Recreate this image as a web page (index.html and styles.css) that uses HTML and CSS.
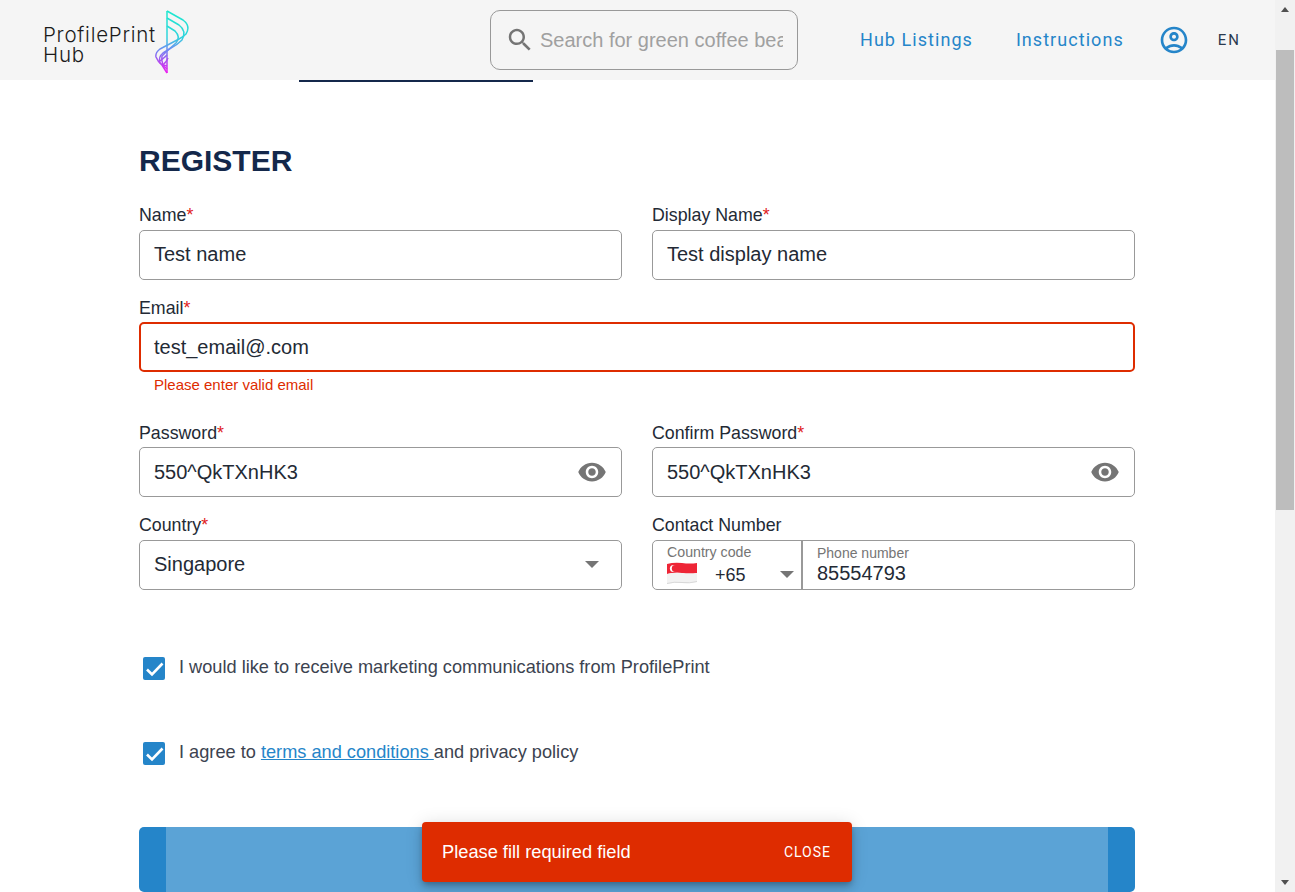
FILE: index.html
```html
<!DOCTYPE html>
<html lang="en">

<head>
    <meta charset="UTF-8" />
    <title>ProfilePrint Hub - Register</title>
    <link rel="stylesheet" href="styles.css">
</head>

<body>
    <div class="window">
        <div class="page">
            <header class="topbar">
                <a class="logo" href="#">
                    <span class="logo-text">ProfilePrint<br>Hub</span>
                    <svg class="logo-mark" width="36" height="68" viewBox="0 0 36 68" fill="none">
                        <defs>
                            <linearGradient id="logo-grad" gradientUnits="userSpaceOnUse" x1="0" y1="2" x2="0" y2="64">
                                <stop offset="0" stop-color="#1de8cf" />
                                <stop offset="0.42" stop-color="#2fd4dc" />
                                <stop offset="0.62" stop-color="#6d8cf2" />
                                <stop offset="0.82" stop-color="#b04cf0" />
                                <stop offset="1" stop-color="#ee1cf0" />
                            </linearGradient>
                        </defs>
                        <g stroke="url(#logo-grad)" stroke-width="1.5" stroke-linejoin="round">
                            <path d="M12 2V64" />
                            <path d="M12 2L28 11Q36 17 31 25Q28 28 24 30L5 40Q0 44 1 48Q3 53 7 56L12 64" />
                            <path d="M12 9L24 16Q32 22 27 31Q22 36 16 39L8 44Q3 48 5 54L12 60" />
                            <path d="M12 17L20 22Q26 28 21 34L12 42L7 47Q6 51 8 56L12 57" />
                            <path d="M5 52Q10 48 12 46M8 56Q12 52 13 49" />
                        </g>
                    </svg>
                </a>
                <label class="search">
                    <svg class="search-icon" width="30" height="30" viewBox="0 0 24 24">
                        <path d="M15.5 14h-.79l-.28-.27C15.41 12.59 16 11.11 16 9.5 16 5.91 13.09 3 9.5 3S3 5.91 3 9.5 5.91 16 9.5 16c1.61 0 3.09-.59 4.23-1.57l.27.28v.79l5 4.99L20.49 19l-4.99-5zm-6 0C7.01 14 5 11.99 5 9.5S7.01 5 9.5 5 14 7.01 14 9.5 11.99 14 9.5 14z" />
                    </svg>
                    <input type="text" placeholder="Search for green coffee beans">
                </label>
                <nav class="nav">
                    <a href="#">Hub Listings</a>
                    <a href="#">Instructions</a>
                    <svg class="account-icon" width="32" height="32" viewBox="0 0 24 24">
                        <path d="M12 2C6.48 2 2 6.48 2 12s4.48 10 10 10 10-4.48 10-10S17.52 2 12 2zM7.35 18.5C8.66 17.56 10.26 17 12 17s3.34.56 4.65 1.5C15.34 19.44 13.74 20 12 20s-3.34-.56-4.65-1.5zm10.79-1.38C16.45 15.8 14.32 15 12 15s-4.45.8-6.14 2.12C4.7 15.73 4 13.95 4 12c0-4.42 3.58-8 8-8s8 3.58 8 8c0 1.95-.7 3.73-1.86 5.12zM12 6c-1.93 0-3.5 1.57-3.5 3.5S10.07 13 12 13s3.5-1.57 3.5-3.5S13.93 6 12 6zm0 5c-.83 0-1.5-.67-1.5-1.5S11.17 8 12 8s1.5.67 1.5 1.5S12.83 11 12 11z" />
                    </svg>
                    <span class="lang">EN</span>
                </nav>
            </header>
            <div class="tab-line"></div>

            <main class="content">
                <h1>REGISTER</h1>
                <form class="form-grid">
                    <div class="field">
                        <label>Name<span class="req">*</span></label>
                        <div class="box box-up">Test name</div>
                    </div>
                    <div class="field">
                        <label>Display Name<span class="req">*</span></label>
                        <div class="box box-up">Test display name</div>
                    </div>
                    <div class="field wide">
                        <label class="label-low">Email<span class="req">*</span></label>
                        <div class="box box-error">test_email@.com</div>
                        <p class="error-text">Please enter valid email</p>
                    </div>
                    <div class="field">
                        <label class="label-low">Password<span class="req">*</span></label>
                        <div class="box">
                            <span>550^QkTXnHK3</span>
                            <svg class="eye" width="30" height="30" viewBox="0 0 24 24">
                                <path d="M12 4.5C7 4.5 2.73 7.61 1 12c1.73 4.39 6 7.5 11 7.5s9.27-3.11 11-7.5c-1.73-4.39-6-7.5-11-7.5zM12 17c-2.76 0-5-2.24-5-5s2.24-5 5-5 5 2.24 5 5-2.24 5-5 5zm0-8c-1.66 0-3 1.34-3 3s1.34 3 3 3 3-1.34 3-3-1.34-3-3-3z" />
                            </svg>
                        </div>
                    </div>
                    <div class="field">
                        <label class="label-low">Confirm Password<span class="req">*</span></label>
                        <div class="box">
                            <span>550^QkTXnHK3</span>
                            <svg class="eye" width="30" height="30" viewBox="0 0 24 24">
                                <path d="M12 4.5C7 4.5 2.73 7.61 1 12c1.73 4.39 6 7.5 11 7.5s9.27-3.11 11-7.5c-1.73-4.39-6-7.5-11-7.5zM12 17c-2.76 0-5-2.24-5-5s2.24-5 5-5 5 2.24 5 5-2.24 5-5 5zm0-8c-1.66 0-3 1.34-3 3s1.34 3 3 3 3-1.34 3-3-1.34-3-3-3z" />
                            </svg>
                        </div>
                    </div>
                    <div class="field field-low">
                        <label>Country<span class="req">*</span></label>
                        <div class="box box-up">
                            <span>Singapore</span>
                            <span class="caret caret-country"></span>
                        </div>
                    </div>
                    <div class="field field-low">
                        <label>Contact Number</label>
                        <div class="phone">
                            <div class="phone-code">
                                <span class="small-label">Country code</span>
                                <div class="code-row">
                                    <svg class="flag" width="30" height="22" viewBox="0 0 30 22">
                                        <path d="M0 2Q7 0 15 1T30 1V11Q22 12 15 11T0 12Z" fill="#ee2536" />
                                        <path d="M0 12Q7 10 15 11T30 11V20Q22 22 15 21T0 22Z" fill="#f2f2f2" />
                                        <path d="M0 21.5Q7 19.5 15 20.5T30 19.5" stroke="#d8d8d8" fill="none" />
                                        <circle cx="6.5" cy="6.5" r="3.6" fill="#fff" />
                                        <circle cx="8.2" cy="6.5" r="3.4" fill="#ee2536" />
                                    </svg>
                                    <span class="dial">+65</span>
                                    <span class="caret"></span>
                                </div>
                            </div>
                            <div class="phone-number">
                                <span class="small-label">Phone number</span>
                                <span class="phone-value">85554793</span>
                            </div>
                        </div>
                    </div>
                </form>

                <div class="check-row first">
                    <span class="check">
                        <svg width="22" height="22" viewBox="0 0 22 22" fill="none">
                            <path d="M4 11.5L9 16.5L19.5 5.5" stroke="#fff" stroke-width="2.6" />
                        </svg>
                    </span>
                    <span class="check-text">I would like to receive marketing communications from ProfilePrint</span>
                </div>
                <div class="check-row">
                    <span class="check">
                        <svg width="22" height="22" viewBox="0 0 22 22" fill="none">
                            <path d="M4 11.5L9 16.5L19.5 5.5" stroke="#fff" stroke-width="2.6" />
                        </svg>
                    </span>
                    <span class="check-text">I agree to <a href="#">terms and conditions </a>and privacy policy</span>
                </div>

                <div class="submit">
                    <div class="submit-ripple"></div>
                </div>
            </main>

            <div class="snackbar">
                <span>Please fill required field</span>
                <span class="snackbar-close">CLOSE</span>
            </div>
        </div>

        <div class="scrollbar">
            <span class="arrow-up"></span>
            <div class="scroll-track">
                <div class="scroll-thumb"></div>
            </div>
            <span class="arrow-down"></span>
        </div>
    </div>
</body>

</html>
```

FILE: styles.css
```css
* {
    box-sizing: border-box;
}

html,
body {
    margin: 0;
    height: 100%;
    overflow: hidden;
}

body {
    font-family: "Liberation Sans", Arial, sans-serif;
    background-color: #fff;
    color: #232a35;
}

.window {
    display: flex;
    height: 892px;
}

.page {
    flex: 1;
    position: relative;
    overflow: hidden;
}

/* header */
.topbar {
    display: flex;
    align-items: center;
    height: 80px;
    padding-left: 43px;
    background-color: #f5f5f5;
}

.logo {
    display: flex;
    align-items: center;
    width: 447px;
    color: #1b1b1b;
    text-decoration: none;
}

.logo-text {
    width: 112px;
    flex: none;
    font-family: Inter, sans-serif;
    font-size: 20.5px;
    font-weight: 300;
    letter-spacing: 0.75px;
    line-height: 20px;
    white-space: nowrap;
    margin-top: 10px;
}

.logo-mark {
    margin-top: 6px;
}

.search {
    display: flex;
    align-items: center;
    width: 308px;
    height: 60px;
    padding: 0 14px;
    border: 1px solid #999;
    border-radius: 10px;
}

.search-icon {
    flex: none;
    fill: #757575;
}

.search input {
    flex: 1;
    min-width: 0;
    margin-left: 5px;
    padding: 0;
    border: 0;
    outline: 0;
    background: transparent;
    font-family: "Liberation Sans", Arial, sans-serif;
    font-size: 20px;
}

.search input::placeholder {
    color: #a0a0a0;
}

.nav {
    display: flex;
    align-items: center;
    margin-left: 62px;
}

.nav a {
    margin-top: -2px;
    margin-right: 43px;
    color: #2585c9;
    font-family: Roboto, sans-serif;
    font-size: 18px;
    letter-spacing: 1.05px;
    text-decoration: none;
}

.account-icon {
    margin-left: -9px;
    fill: #2585c9;
}

.lang {
    margin-left: 28px;
    color: #2b3a4f;
    font-family: Roboto, sans-serif;
    font-size: 15px;
    letter-spacing: 1.9px;
}

.tab-line {
    width: 234px;
    height: 2px;
    margin-left: 299px;
    background-color: #14284b;
}

/* form */
.content {
    width: 996px;
    margin-left: 139px;
}

h1 {
    margin: 0;
    padding-top: 61px;
    height: 122px;
    color: #14284b;
    font-size: 30px;
    font-weight: 700;
    line-height: 36px;
}

.form-grid {
    display: grid;
    grid-template-columns: 483px 483px;
    column-gap: 30px;
    row-gap: 16px;
}

.wide {
    grid-column: 1 / 3;
}

.field-low {
    margin-top: 1px;
}

.field label {
    display: block;
    height: 22px;
    margin-bottom: 4px;
    font-size: 17.8px;
    line-height: 23px;
}

.field .label-low {
    line-height: 25px;
}

.req {
    color: #e02020;
}

.box {
    display: flex;
    align-items: center;
    justify-content: space-between;
    height: 50px;
    padding: 0 14px;
    border: 1px solid #999;
    border-radius: 5px;
    font-size: 20px;
}

.box-up {
    padding-bottom: 2px;
}

.box-error {
    border: 2px solid #de2c00;
    padding: 0 13px;
}

.error-text {
    height: 33px;
    margin: 0;
    padding: 5px 0 0 15px;
    color: #de2c00;
    font-size: 15px;
    line-height: 16px;
}

.eye {
    flex: none;
    fill: #757575;
}

.caret {
    flex: none;
    width: 0;
    height: 0;
    border-left: 7px solid transparent;
    border-right: 7px solid transparent;
    border-top: 7px solid #757575;
}

.caret-country {
    margin-right: 8px;
}

.phone {
    display: flex;
    height: 50px;
    border: 1px solid #999;
    border-radius: 5px;
}

.phone-code {
    flex: none;
    width: 150px;
    padding: 3px 7px 0 14px;
    border-right: 2px solid #999;
}

.small-label {
    display: block;
    color: #757575;
    font-size: 14.2px;
    line-height: 16px;
}

.phone-number .small-label {
    font-size: 14px;
}

.code-row {
    display: flex;
    align-items: center;
    height: 28px;
    color: #232a35;
}

.flag {
    flex: none;
    margin-top: -3px;
}

.dial {
    margin-left: 18px;
    margin-top: 3px;
    font-size: 18px;
}

.code-row .caret {
    margin-left: auto;
}

.phone-number {
    flex: 1;
    padding: 4px 14px 0 14px;
}

.phone-value {
    display: block;
    margin-top: 1px;
    font-size: 20px;
    line-height: 23px;
}

/* checkboxes */
.check-row {
    display: flex;
    align-items: flex-start;
    height: 24px;
    margin-top: 61px;
    margin-left: 4px;
}

.check-row.first {
    margin-top: 67px;
}

.check {
    display: flex;
    align-items: center;
    justify-content: center;
    width: 22px;
    height: 23px;
    border-radius: 2px;
    background-color: #2585c9;
}

.check-text {
    margin-left: 14px;
    margin-top: -1px;
    color: #3c4350;
    font-size: 18.2px;
    line-height: 22px;
}

.check-text a {
    color: #2585c9;
}

.submit {
    display: flex;
    height: 65px;
    margin-top: 61px;
    padding: 0 27px;
    border-radius: 5px;
    overflow: hidden;
    background-color: #2585c9;
}

.submit-ripple {
    flex: 1;
    background-color: #5ba3d6;
}

/* overlays */
.snackbar {
    position: absolute;
    left: 422px;
    top: 822px;
    display: flex;
    align-items: center;
    justify-content: space-between;
    width: 430px;
    height: 60px;
    padding: 0 21px 0 20px;
    border-radius: 4px;
    background-color: #de2c00;
    box-shadow: 0 3px 5px -1px rgba(0, 0, 0, 0.2), 0 6px 10px rgba(0, 0, 0, 0.14), 0 1px 18px rgba(0, 0, 0, 0.12);
    color: #fff;
    font-size: 18.25px;
}

.snackbar-close {
    font-family: Roboto, sans-serif;
    font-size: 14px;
    letter-spacing: 1px;
}

/* window scrollbar, the screenshot keeps it visible */
.scrollbar {
    display: flex;
    flex-direction: column;
    align-items: center;
    flex: none;
    width: 20px;
    background-color: #f1f1f1;
}

.arrow-up,
.arrow-down {
    flex: none;
    width: 0;
    height: 0;
    margin: 7px 0;
    border-left: 4px solid transparent;
    border-right: 4px solid transparent;
}

.arrow-up {
    border-bottom: 5px solid #505050;
}

.arrow-down {
    border-top: 5px solid #505050;
}

.scroll-track {
    flex: 1;
    width: 100%;
    padding-top: 31px;
}

.scroll-thumb {
    width: 18px;
    height: 460px;
    margin-left: 1px;
    background-color: #bdbdbd;
}
```
